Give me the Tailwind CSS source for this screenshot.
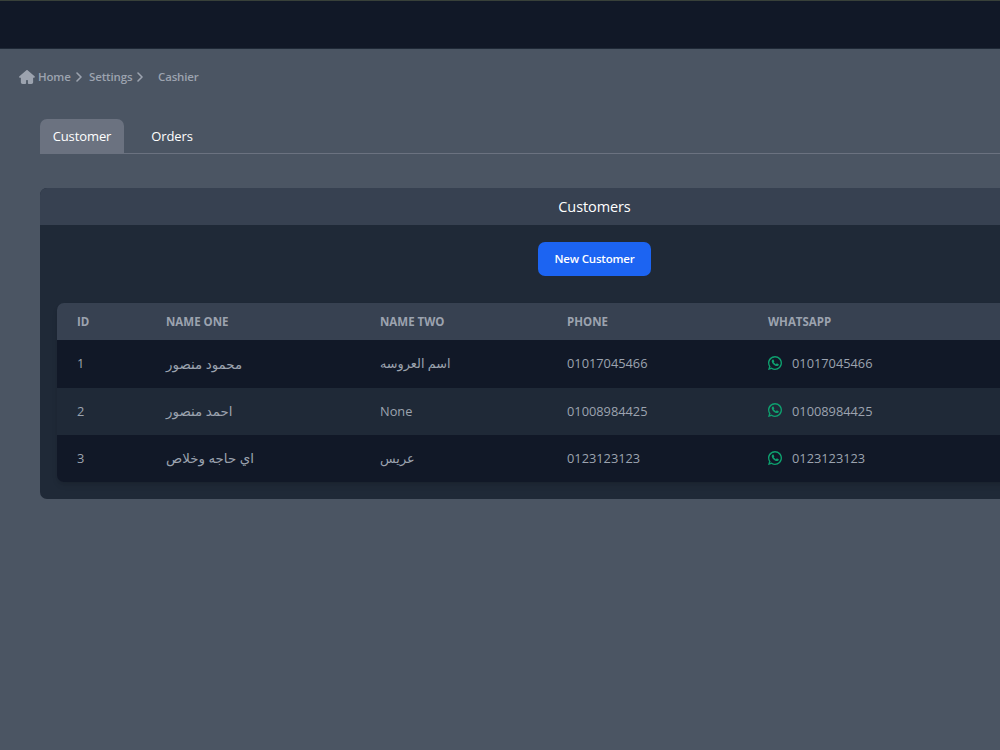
<!DOCTYPE html>
<html lang="en">
<head>
    <meta charset="UTF-8">
    <title>Cashier</title>
    <meta name="viewport" content="width=device-width, initial-scale=1.0">
    <script src="https://cdn.jsdelivr.net/npm/@tailwindcss/browser@4"></script>
</head>
<body class="bg-[#4b5563] h-screen overflow-hidden font-['Open_Sans','Noto_Sans','DejaVu_Sans',sans-serif]">

<!-- icons used more than once -->
<svg class="hidden">
    <symbol id="chevron" viewBox="0 0 6 10">
        <path d="m1 9 4-4-4-4" fill="none" stroke="currentColor" stroke-width="1.6" stroke-linecap="round" stroke-linejoin="round"/>
    </symbol>
    <symbol id="whatsapp" viewBox="2 2 20 20">
        <path fill="currentColor" fill-rule="evenodd" d="M12 4a8 8 0 0 0-6.895 12.06l.569.718-.697 2.359 2.32-.648.379.243A8 8 0 1 0 12 4ZM2 12C2 6.477 6.477 2 12 2s10 4.477 10 10-4.477 10-10 10a9.96 9.96 0 0 1-5.016-1.347l-4.948 1.426 1.426-5.006A9.961 9.961 0 0 1 2 12Z"/>
        <path fill="currentColor" d="M16.735 13.492c-.038-.018-1.497-.736-1.756-.83a1.008 1.008 0 0 0-.34-.075c-.196 0-.362.098-.49.291-.146.217-.587.732-.723.886-.018.02-.042.045-.057.045-.013 0-.239-.093-.307-.123-1.564-.68-2.751-2.313-2.914-2.589-.023-.04-.024-.057-.024-.057.005-.021.058-.074.085-.101.08-.079.166-.182.249-.283l.117-.14c.121-.14.175-.25.237-.375l.033-.066a.68.68 0 0 0-.02-.64c-.034-.069-.65-1.555-.715-1.711-.158-.377-.366-.552-.655-.552-.137.005-.883.104-1.213.311-.35.22-.94.924-.94 2.16 0 1.112.705 2.162 1.008 2.561l.041.06c1.161 1.695 2.608 2.951 4.074 3.537 1.412.564 2.081.63 2.461.63.16 0 .288-.013.4-.024l.072-.007c.488-.043 1.56-.599 1.804-1.276.192-.534.243-1.117.115-1.329-.088-.144-.239-.216-.43-.308Z"/>
    </symbol>
</svg>

<nav class="h-[49px] bg-[#111827] border-t border-[#384039] border-b border-b-[#1f2937]"></nav>

<!-- breadcrumb -->
<div class="flex items-center h-5 mt-[18px] ml-[19px] text-[11.5px] tracking-[-0.15px] font-semibold text-[#9ca3af]">
    <svg class="w-4 h-[14px] mr-[3px]" viewBox="0 0 576 512" fill="currentColor"><path d="M575.8 255.5c0 18-15 32.100-32 32.100h-32l.7 160.200c0 35.300-28.700 64.200-64 64.200H352c-18 0-32-14-32-32v-96c0-9-7-16-16-16h-32c-9 0-16 7-16 16v96c0 18-14 32-32 32h-96.500c-35.300 0-64-28.700-64-64V287.600H32c-18 0-32-14-32-32.100 0-9 3-17 10-24L266.400 8c7-7 15-8 22-8s15 2 21 7l255.400 224.500c8 7 12 15 11 24z"/></svg>
    <a href="#" class="w-[38px]">Home</a>
    <svg class="w-[6px] h-[10px]"><use href="#chevron"/></svg>
    <a href="#" class="w-[48px] ml-[7px]">Settings</a>
    <svg class="w-[6px] h-[10px]"><use href="#chevron"/></svg>
    <span class="ml-[15px]">Cashier</span>
</div>

<div class="overflow-hidden pl-10">
    <div class="w-[1109px]">
        <!-- tabs -->
        <div class="flex mt-8 border-b border-[#6b7280] text-[13px] tracking-[-0.1px] text-white">
            <button class="w-[84px] h-[34px] pt-0.5 bg-[#6b7280] rounded-t-[7px]">Customer</button>
            <button class="w-[68px] h-[34px] pt-0.5 ml-[14px]">Orders</button>
        </div>

        <div class="mt-[34px] bg-[#1f2937] rounded-[7px] overflow-hidden h-[311px]">
            <h1 class="h-[37px] leading-[37px] bg-[#374151] text-center text-white text-[14.5px] tracking-[-0.1px]">Customers</h1>
            <div class="flex justify-center pt-[17px]">
                <button class="w-[113px] h-[34px] bg-[#1c64f2] rounded-[7px] text-white text-[11.5px] tracking-[-0.2px] font-semibold">New Customer</button>
            </div>
            <div class="mt-[27px] mx-[17px] rounded-[7px] overflow-hidden shadow-md">
                <table class="w-[1075px] table-fixed text-left text-[12.8px] text-[#9ca3af]">
                    <thead class="bg-[#374151] text-[11.5px] font-bold">
                        <tr class="h-[37px]">
                            <th class="w-[109px] pl-5">ID</th>
                            <th class="w-[214px]">NAME ONE</th>
                            <th class="w-[187px]">NAME TWO</th>
                            <th class="w-[201px]">PHONE</th>
                            <th>WHATSAPP</th>
                        </tr>
                    </thead>
                    <tbody>
                        <tr class="h-[47.500px] bg-[#111827]">
                            <td class="pl-5">1</td>
                            <td class="text-[13.4px]">محمود منصور</td>
                            <td>اسم العروسه</td>
                            <td>01017045466</td>
                            <td><div class="flex items-center gap-[10px]"><svg class="size-[14px] -mt-0.5 text-[#0e9f6e]"><use href="#whatsapp"/></svg>01017045466</div></td>
                        </tr>
                        <tr class="h-[47.500px] bg-[#1f2937]">
                            <td class="pl-5">2</td>
                            <td class="text-[13.4px]">احمد منصور</td>
                            <td>None</td>
                            <td>01008984425</td>
                            <td><div class="flex items-center gap-[10px]"><svg class="size-[14px] -mt-0.5 text-[#0e9f6e]"><use href="#whatsapp"/></svg>01008984425</div></td>
                        </tr>
                        <tr class="h-[47px] bg-[#111827]">
                            <td class="pl-5">3</td>
                            <td class="text-[13.4px]">اي حاجه وخلاص</td>
                            <td>عريس</td>
                            <td>0123123123</td>
                            <td><div class="flex items-center gap-[10px]"><svg class="size-[14px] -mt-0.5 text-[#0e9f6e]"><use href="#whatsapp"/></svg>0123123123</div></td>
                        </tr>
                    </tbody>
                </table>
            </div>
        </div>
    </div>
</div>

</body>
</html>
